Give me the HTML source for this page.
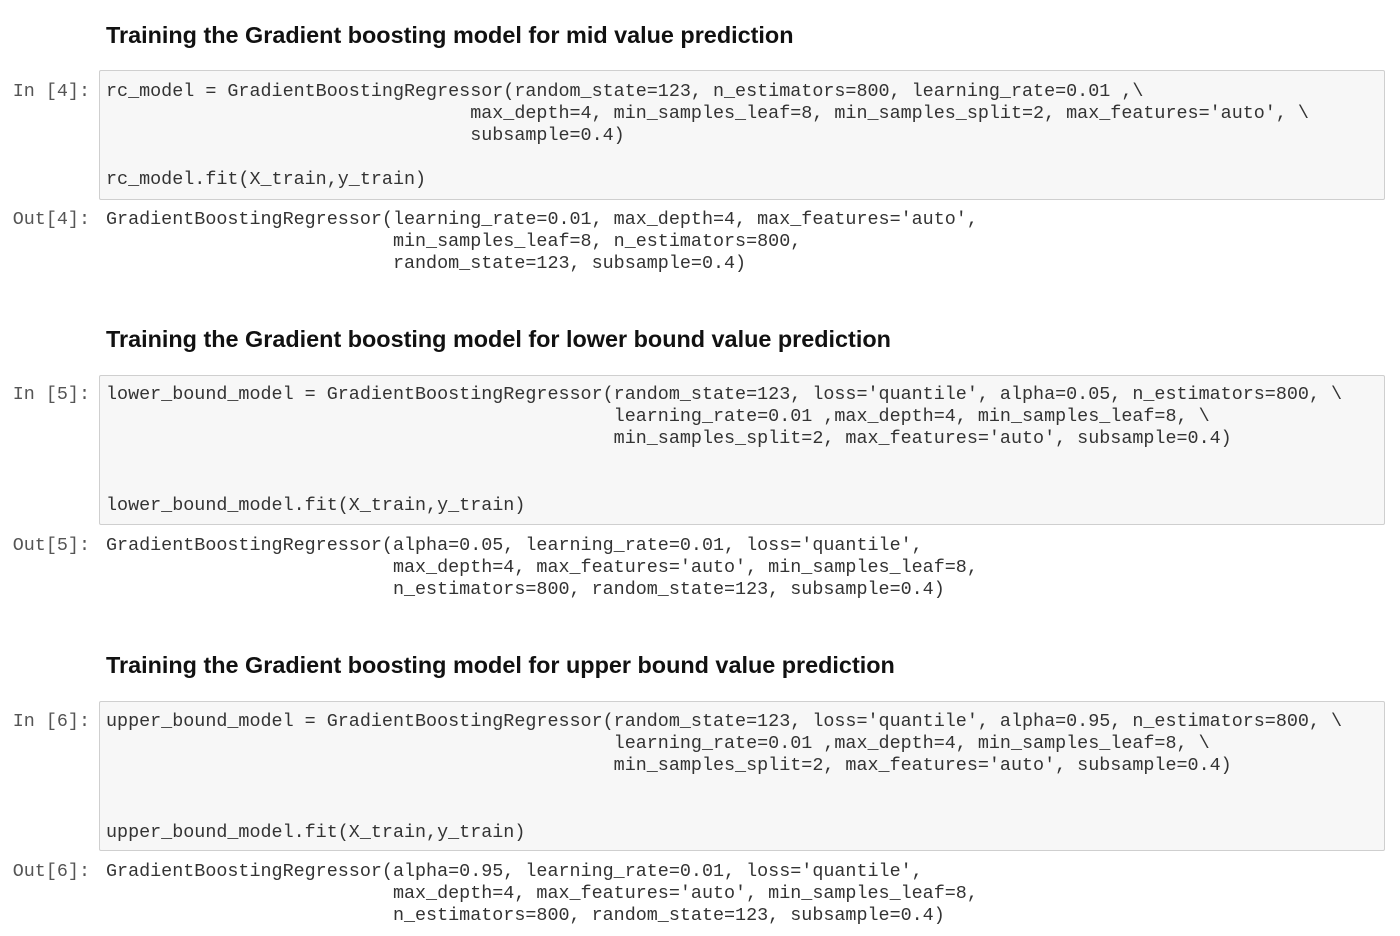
<!DOCTYPE html>
<html><head><meta charset="utf-8"><style>
body{margin:0;width:1400px;height:936px;background:#fff;position:relative;overflow:hidden}
.h{position:absolute;left:106px;font:bold 23.4px/28px "Liberation Sans",sans-serif;color:#111;white-space:nowrap}
.box{position:absolute;left:99px;width:1284px;background:#f7f7f7;border:1px solid #cfcfcf;border-radius:2px}
.c{position:absolute;left:106px;font:18.4px/22px "Liberation Mono",monospace;color:#333;white-space:pre}
.p{position:absolute;width:90px;text-align:right;left:0;font:18.4px/22px "Liberation Mono",monospace;color:#555;white-space:pre}
</style></head><body>
<div class="h" style="top:21px">Training the Gradient boosting model for mid value prediction</div>
<div class="box" style="top:70px;height:128px"></div>
<div class="p" style="top:81px">In [4]:</div>
<div class="c" style="top:81px">rc_model = GradientBoostingRegressor(random_state=123, n_estimators=800, learning_rate=0.01 ,\
                                 max_depth=4, min_samples_leaf=8, min_samples_split=2, max_features='auto', \
                                 subsample=0.4)

rc_model.fit(X_train,y_train)</div>
<div class="p" style="top:209px">Out[4]:</div>
<div class="c" style="top:209px">GradientBoostingRegressor(learning_rate=0.01, max_depth=4, max_features='auto',
                          min_samples_leaf=8, n_estimators=800,
                          random_state=123, subsample=0.4)</div>

<div class="h" style="top:325px">Training the Gradient boosting model for lower bound value prediction</div>
<div class="box" style="top:375px;height:148px"></div>
<div class="p" style="top:384px">In [5]:</div>
<div class="c" style="top:384px">lower_bound_model = GradientBoostingRegressor(random_state=123, loss='quantile', alpha=0.05, n_estimators=800, \
                                              learning_rate=0.01 ,max_depth=4, min_samples_leaf=8, \
                                              min_samples_split=2, max_features='auto', subsample=0.4)</div>
<div class="c" style="top:495px">lower_bound_model.fit(X_train,y_train)</div>
<div class="p" style="top:535px">Out[5]:</div>
<div class="c" style="top:535px">GradientBoostingRegressor(alpha=0.05, learning_rate=0.01, loss='quantile',
                          max_depth=4, max_features='auto', min_samples_leaf=8,
                          n_estimators=800, random_state=123, subsample=0.4)</div>

<div class="h" style="top:651px">Training the Gradient boosting model for upper bound value prediction</div>
<div class="box" style="top:701px;height:148px"></div>
<div class="p" style="top:711px">In [6]:</div>
<div class="c" style="top:711px">upper_bound_model = GradientBoostingRegressor(random_state=123, loss='quantile', alpha=0.95, n_estimators=800, \
                                              learning_rate=0.01 ,max_depth=4, min_samples_leaf=8, \
                                              min_samples_split=2, max_features='auto', subsample=0.4)</div>
<div class="c" style="top:822px">upper_bound_model.fit(X_train,y_train)</div>
<div class="p" style="top:861px">Out[6]:</div>
<div class="c" style="top:861px">GradientBoostingRegressor(alpha=0.95, learning_rate=0.01, loss='quantile',
                          max_depth=4, max_features='auto', min_samples_leaf=8,
                          n_estimators=800, random_state=123, subsample=0.4)</div>
</body></html>
